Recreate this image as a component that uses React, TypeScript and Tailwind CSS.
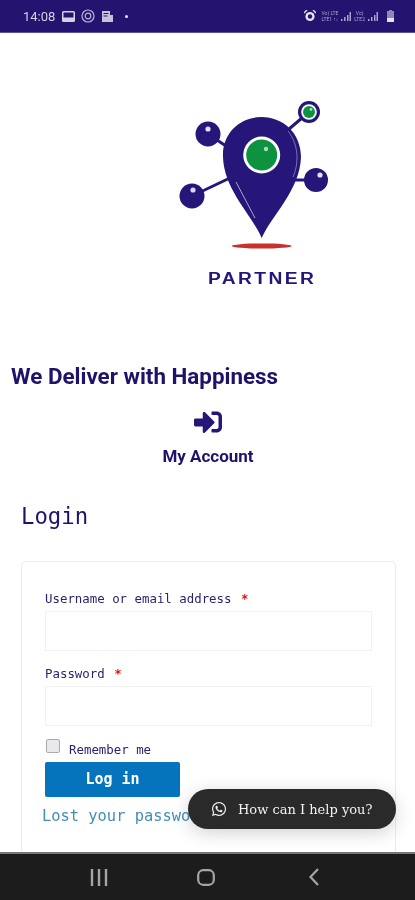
import { FaWhatsapp, FaSignInAlt } from "react-icons/fa";

const mono = "font-['DejaVu_Sans_Mono','Liberation_Mono',monospace]";

function Logo() {
  return (
    <svg width="180" height="170" viewBox="0 0 180 170" className="block">
      <g stroke="#26167a" strokeWidth="3">
        <line x1="48" y1="49" x2="72" y2="65" />
        <line x1="32" y1="111" x2="72" y2="92" />
        <line x1="156" y1="95" x2="130" y2="95" />
        <line x1="149" y1="27" x2="122" y2="50" />
      </g>
      <path d="M101.7 153 C92 130 64 105 63 72 C62 48 80 32 101.7 32 C123 32 141 48 141 72 C140 105 112 130 101.7 153 Z" fill="#26167a" />
      <path d="M128 46 C139 60 139 78 133 92" stroke="#8f86c0" strokeWidth="0.8" fill="none" />
      <path d="M76 97 L95 133" stroke="#a9a3d0" strokeWidth="1" fill="none" />
      <circle cx="101.7" cy="70" r="18.5" fill="#fff" />
      <circle cx="101.7" cy="70" r="15.5" fill="#0d9340" />
      <circle cx="106" cy="64" r="2.2" fill="#a8dcb8" />
      <circle cx="48" cy="49" r="12.5" fill="#26167a" />
      <circle cx="48" cy="44" r="2.6" fill="#e4e2f2" />
      <circle cx="32" cy="111" r="12.5" fill="#26167a" />
      <circle cx="33" cy="105" r="2.6" fill="#d8d5ec" />
      <circle cx="156" cy="95" r="12" fill="#26167a" />
      <circle cx="160" cy="90" r="2.6" fill="#e4e2f2" />
      <circle cx="149" cy="27" r="11" fill="#26167a" />
      <circle cx="149" cy="27" r="7.8" fill="#fff" />
      <circle cx="149" cy="27" r="6" fill="#0d9340" />
      <circle cx="151" cy="24.5" r="1.4" fill="#a8dcb8" />
      <ellipse cx="101.7" cy="161" rx="30" ry="2.6" fill="#c9302c" />
    </svg>
  );
}

function StatusBar() {
  return (
    <div className="h-[33px] shrink-0 bg-[#24146f] border-b border-b-[#5b4fa0] flex items-center justify-between pl-[23px] pr-[21px] text-[#d5d2e6]">
      <div className="flex items-center gap-[4px]">
        <span className="font-['Roboto',sans-serif] text-[13px] leading-none">14:08</span>
        <svg width="13" height="11" viewBox="0 0 13 11" className="ml-[3px]">
          <rect x="0" y="0" width="13" height="11" rx="1.5" fill="#d5d2e6" />
          <rect x="1.5" y="1.5" width="10" height="5" fill="#24146f" />
        </svg>
        <svg width="14" height="14" viewBox="0 0 14 14" className="ml-[2px]">
          <circle cx="7" cy="7" r="6" fill="none" stroke="#b9b5d6" strokeWidth="1.2" />
          <circle cx="7" cy="7" r="2.8" fill="none" stroke="#b9b5d6" strokeWidth="1.2" />
        </svg>
        <svg width="13" height="13" viewBox="0 0 13 13" className="ml-[2px]">
          <path d="M1 1h8v4h3v7H1z" fill="#c6c2dc" />
          <rect x="2.5" y="3" width="5" height="1" fill="#24146f" />
          <rect x="2.5" y="5.5" width="4" height="1" fill="#24146f" />
        </svg>
        <span className="ml-[7px] w-[3px] h-[3px] rounded-full bg-[#e5e3f0]" />
      </div>
      <div className="flex items-center gap-[3px]">
        <svg width="12" height="12" viewBox="0 0 12 12" className="mr-[2px]">
          <circle cx="6" cy="6.5" r="4.6" fill="#e5e3f0" />
          <circle cx="6" cy="6.5" r="2.2" fill="#24146f" />
          <path d="M0 3 3 0M12 3 9 0" stroke="#e5e3f0" strokeWidth="1.4" />
        </svg>
        <span className="font-['Roboto',sans-serif] text-[5px] leading-[6px] text-center text-[#a9a4cc]">Vo) LTE<br />LTE1 ↑↓</span>
        <svg width="10" height="9" viewBox="0 0 10 9">
          <path d="M0 9V7h1.5v2zM3 9V5h1.5v4zM6 9V3h1.5v6zM8.5 9V0H10v9z" fill="#a9a4cc" />
        </svg>
        <span className="font-['Roboto',sans-serif] text-[5px] leading-[6px] text-center text-[#a9a4cc]">Vo)<br />LTE2</span>
        <svg width="10" height="9" viewBox="0 0 10 9">
          <path d="M0 9V7h1.5v2zM3 9V5h1.5v4zM6 9V3h1.5v6zM8.5 9V0H10v9z" fill="#a9a4cc" />
        </svg>
        <svg width="7" height="12" viewBox="0 0 7 12" className="ml-[6px]">
          <path d="M2 0h3v1h2v11H0V1h2z" fill="#8d88b4" />
          <rect x="0" y="8" width="7" height="4" fill="#e5e3f0" />
        </svg>
      </div>
    </div>
  );
}

function Field({ label, className }: { label: string; className: string }) {
  return (
    <div className={className}>
      <div className={`${mono} text-[12.4px] leading-[16px] text-[#2c2270]`}>
        {label} <span className="text-[#e01515] font-bold ml-[2px]">*</span>
      </div>
      <div className="mt-[4px] h-[40px] w-[327px] border border-[#f1f1f3] bg-white" />
    </div>
  );
}

export default function App() {
  return (
    <div className="relative h-[900px] w-[415px] overflow-hidden bg-white flex flex-col blur-[0.6px]">
      <StatusBar />
      <div className="flex-1 min-h-0 overflow-hidden">
        <div className="mt-[52px] flex flex-col items-start pl-[160px]">
          <Logo />
          <div className="ml-[48px] mt-[15px] font-['Liberation_Sans',sans-serif] font-bold text-[16px] leading-[18px] tracking-[2px] text-[#26167a] scale-x-[1.2] origin-left">PARTNER</div>
        </div>
        <h1 className="mt-[74px] ml-[11px] font-['Roboto',sans-serif] font-bold text-[22.4px] leading-[28px] text-[#20126b]">We Deliver with Happiness</h1>
        <div className="mt-[18px] flex flex-col items-center pl-[1px]">
          <FaSignInAlt size={28} className="text-[#26167a]" />
          <div className="mt-[10px] font-['Roboto',sans-serif] font-bold text-[17px] leading-[20px] text-[#20126b]">My Account</div>
        </div>
        <h2 className={`${mono} mt-[35px] ml-[21px] text-[22.3px] leading-[30px] text-[#20126b]`}>Login</h2>
        <div className="mt-[30px] ml-[21px] w-[375px] h-[320px] rounded-[5px] border border-[#ececef] bg-white pl-[23px] pt-[29px]">
          <Field label="Username or email address" className="" />
          <Field label="Password" className="mt-[15px]" />
          <div className="mt-[13px] flex items-start">
            <div className="ml-[1px] w-[14px] h-[14px] rounded-[2px] border border-[#aaaab0] bg-[#e9e9ec]" />
            <span className={`${mono} ml-[9px] mt-[3px] text-[12.4px] leading-[15px] text-[#2c2270]`}>Remember me</span>
          </div>
          <div className={`${mono} mt-[5px] w-[135px] h-[35px] rounded-[2px] bg-[#0673bd] text-white font-bold text-[15px] flex items-center justify-center`}>Log in</div>
          <div className={`${mono} -ml-[3px] mt-[9px] text-[15.4px] leading-[20px] text-[#3f8fb3]`}>Lost your password?</div>
        </div>
      </div>
      <div className="absolute left-[188px] top-[789px] w-[208px] h-[40px] rounded-full bg-[#2a2a2b] text-[#f2f2f2] flex items-center pl-[23px] gap-[11px] shadow-[0_4px_18px_rgba(0,0,0,0.18)]">
        <FaWhatsapp size={16} />
        <span className="font-['DejaVu_Serif',serif] text-[13px] leading-none">How can I help you?</span>
      </div>
      <div className="h-[48px] shrink-0 bg-[#1c1c1d] border-t-2 border-t-[#77777a] flex items-center text-[#a5a5a8]">
        <div className="w-[197px] flex justify-center">
          <svg width="18" height="17" viewBox="0 0 18 17">
            <path d="M2 0v17M9 0v17M16 0v17" stroke="#a5a5a8" strokeWidth="2.4" />
          </svg>
        </div>
        <div className="w-[18px] flex justify-center">
          <svg width="18" height="17" viewBox="0 0 18 17">
            <rect x="1.2" y="1.2" width="15.6" height="14.6" rx="5" fill="none" stroke="#a5a5a8" strokeWidth="2.2" />
          </svg>
        </div>
        <div className="ml-[93px]">
          <svg width="12" height="18" viewBox="0 0 12 18">
            <path d="M10 1 2.5 9l7.5 8" fill="none" stroke="#a5a5a8" strokeWidth="2.2" />
          </svg>
        </div>
      </div>
    </div>
  );
}
